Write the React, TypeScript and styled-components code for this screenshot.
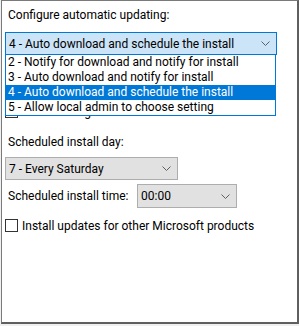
import React from 'react';
import styled, { createGlobalStyle } from 'styled-components';

const GlobalStyle = createGlobalStyle`
  html, body {
    margin: 0;
    padding: 0;
    background: #f0f0f0;
  }
  body {
    font-family: Roboto, 'Segoe UI', sans-serif;
    font-size: 12px;
    color: #000;
  }
`;

const Panel = styled.div`
  box-sizing: border-box;
  width: 298px;
  height: 324px;
  margin-left: 1px;
  background: #fff;
  border: 1px solid #7a7a7a;
  border-right: 2px solid #5f5f5f;
  border-bottom: 2px solid #5f5f5f;
  padding: 6px 0 0 3px;
  display: flex;
  flex-direction: column;
`;

const Label = styled.div<{ $top?: number }>`
  margin-top: ${(p) => p.$top ?? 0}px;
  padding-left: 3px;
  height: 16px;
  line-height: 16px;
  white-space: nowrap;
`;

const Combo = styled.div<{ $width: number; $height?: number; $open?: boolean }>`
  box-sizing: border-box;
  width: ${(p) => p.$width}px;
  height: ${(p) => p.$height ?? 23}px;
  display: flex;
  align-items: center;
  justify-content: space-between;
  padding: 0 6px 0 3px;
  background: ${(p) => (p.$open ? '#cce4f7' : '#e1e1e1')};
  border: 1px solid ${(p) => (p.$open ? '#0078d7' : '#adadad')};
  white-space: nowrap;
`;

const ComboWrap = styled.div<{ $top?: number }>`
  position: relative;
  margin-top: ${(p) => p.$top ?? 0}px;
`;

const DropList = styled.ul`
  position: absolute;
  z-index: 2;
  left: 0;
  top: 22px;
  box-sizing: border-box;
  width: 271px;
  margin: 0;
  padding: 0;
  list-style: none;
  background: #fff;
  border: 1px solid #0078d7;
`;

const Option = styled.li<{ $selected?: boolean }>`
  height: 15px;
  line-height: 15px;
  padding-left: 2px;
  white-space: nowrap;
  background: ${(p) => (p.$selected ? '#0078d7' : 'transparent')};
  color: ${(p) => (p.$selected ? '#fff' : '#000')};
`;

const Row = styled.div<{ $top?: number; $height?: number }>`
  display: flex;
  align-items: center;
  height: ${(p) => p.$height ?? 13}px;
  margin-top: ${(p) => p.$top ?? 0}px;
`;

const Box = styled.span`
  box-sizing: border-box;
  width: 13px;
  height: 13px;
  border: 1px solid #333;
  background: #fff;
  flex-shrink: 0;
`;

const CheckText = styled.span`
  margin-left: 4px;
  line-height: 16px;
  white-space: nowrap;
`;

const TimeLabel = styled.span`
  width: 132px;
  padding-left: 3px;
  box-sizing: border-box;
  white-space: nowrap;
`;

const Chevron = () => (
  <svg width="9" height="5" viewBox="0 0 9 5">
    <path d="M0.5 0.5 L4.5 4.5 L8.5 0.5" fill="none" stroke="#606060" strokeWidth="1" />
  </svg>
);

const updateModes = [
  '2 - Notify for download and notify for install',
  '3 - Auto download and notify for install',
  '4 - Auto download and schedule the install',
  '5 - Allow local admin to choose setting',
];

export default function App() {
  return (
    <>
      <GlobalStyle />
      <Panel>
        <Label>Configure automatic updating:</Label>
        <ComboWrap $top={9}>
          <Combo $width={272} $open>
            <span>4 - Auto download and schedule the install</span>
            <Chevron />
          </Combo>
          <DropList>
            {updateModes.map((m) => (
              <Option key={m} $selected={m.startsWith('4')}>
                {m}
              </Option>
            ))}
          </DropList>
        </ComboWrap>
        <Row $top={50}>
          <Box />
          <CheckText>Install during automatic maintenance</CheckText>
        </Row>
        <Label $top={16}>Scheduled install day:</Label>
        <ComboWrap $top={7}>
          <Combo $width={173}>
            <span>7 - Every Saturday</span>
            <Chevron />
          </Combo>
        </ComboWrap>
        <Row $top={4} $height={24}>
          <TimeLabel>Scheduled install time:</TimeLabel>
          <Combo $width={100} $height={24}>
            <span>00:00</span>
            <Chevron />
          </Combo>
        </Row>
        <Row $top={11}>
          <Box />
          <CheckText>Install updates for other Microsoft products</CheckText>
        </Row>
      </Panel>
    </>
  );
}
